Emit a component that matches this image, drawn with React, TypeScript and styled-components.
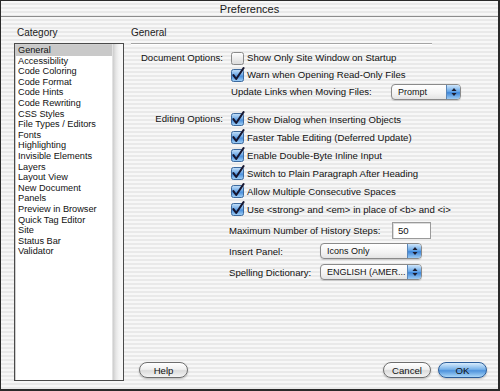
import React from "react";
import styled, { createGlobalStyle, css } from "styled-components";

const GlobalStyle = createGlobalStyle`
  html, body { margin: 0; padding: 0; background: #fff; }
  body { font-family: "Liberation Sans", Arial, sans-serif; }
  * { box-sizing: border-box; }
`;

const pinstripe = css`
  background: repeating-linear-gradient(
    to bottom,
    #f7f7f7 0px,
    #f7f7f7 2px,
    #e9e9e9 2px,
    #e9e9e9 4px
  );
`;

const Window = styled.div`
  width: 500px;
  height: 391px;
  display: flex;
  flex-direction: column;
  border-top: 1px solid #2a2a2a;
  border-left: 1px solid #2a2a2a;
  border-right: 2px solid #2a2a2a;
  border-bottom: 2px solid #2a2a2a;
  ${pinstripe}
  font-size: 9.6px;
  color: #111;
`;

const TitleBar = styled.div`
  height: 16px;
  flex: none;
  display: flex;
  align-items: center;
  justify-content: center;
  border-bottom: 1px solid #8c8c8c;
  font-size: 11px;
  color: #1a1a1a;
`;

const Body = styled.div`
  flex: 1;
  display: flex;
  padding: 10px 11px 8px 13px;
  min-height: 0;
`;

const Sidebar = styled.div`
  width: 110px;
  flex: none;
  display: flex;
  flex-direction: column;
`;

const SectionTitle = styled.div<{ $indent?: number }>`
  height: 12px;
  line-height: 12px;
  padding-left: ${(p) => p.$indent ?? 0}px;
  margin-bottom: 4px;
  font-size: 10px;
  color: #222;
`;

const ListBox = styled.div`
  flex: 1;
  display: flex;
  background: #fff;
  border: 1px solid #4a4a4a;
  box-shadow: inset 1px 1px 0 #cfcfcf;
`;

const ListItems = styled.div`
  flex: 1;
  padding-top: 1px;
`;

const ListItem = styled.div<{ $selected?: boolean }>`
  height: 10.6px;
  line-height: 10.6px;
  font-size: 9.2px;
  padding-left: 3px;
  white-space: nowrap;
  ${(p) =>
    p.$selected &&
    css`
      background: #c9c9c9;
    `}
`;

const ScrollTrack = styled.div`
  width: 11px;
  flex: none;
  background: linear-gradient(to right, #cdcdcd 0px, #e6e6e6 3px, #f4f4f4 6px, #f8f8f8 100%);
  border-left: 1px solid #e2e2e2;
`;

const Main = styled.div`
  flex: 1;
  margin-left: 7px;
  display: flex;
  flex-direction: column;
`;

const Rule = styled.div`
  width: 301px;
  height: 1px;
  background: #a4a4a4;
  box-shadow: 0 1px 0 #fff;
`;

const Form = styled.div`
  display: flex;
  flex-direction: column;
  padding-top: 5px;
`;

const Group = styled.div<{ $gap?: number }>`
  display: grid;
  grid-template-columns: 92px 1fr;
  column-gap: 8px;
  margin-top: ${(p) => p.$gap ?? 0}px;
`;

const GroupLabel = styled.div<{ $h: number }>`
  text-align: right;
  height: ${(p) => p.$h}px;
  line-height: ${(p) => p.$h}px;
  white-space: nowrap;
`;

const Rows = styled.div`
  display: flex;
  flex-direction: column;
`;

const CheckRow = styled.div<{ $h: number }>`
  display: flex;
  align-items: center;
  height: ${(p) => p.$h}px;
  gap: 2px;
  white-space: nowrap;
`;

const FieldRow = styled.div<{ $h: number; $indent?: number }>`
  display: flex;
  align-items: center;
  height: ${(p) => p.$h}px;
  margin-left: ${(p) => p.$indent ?? 0}px;
  white-space: nowrap;
`;

const FieldLabel = styled.div<{ $w: number }>`
  width: ${(p) => p.$w}px;
  flex: none;
`;

const TextInput = styled.div<{ $w: number }>`
  width: ${(p) => p.$w}px;
  height: 17px;
  line-height: 15px;
  padding-left: 5px;
  background: #fff;
  border: 1px solid #9a9a9a;
  box-shadow: inset 1px 1px 0 #dcdcdc;
`;

const Select = styled.div<{ $w: number }>`
  width: ${(p) => p.$w}px;
  height: 16px;
  display: flex;
  border: 1px solid #8a8a8a;
  border-radius: 4px;
  background: linear-gradient(to bottom, #ffffff, #f3f3f3 60%, #e4e4e4);
  box-shadow: 0 1px 1px rgba(0, 0, 0, 0.15);
  overflow: hidden;
`;

const SelectText = styled.div`
  flex: 1;
  min-width: 0;
  line-height: 14px;
  font-size: 9px;
  padding-left: 6px;
  white-space: nowrap;
`;

const SelectCap = styled.div`
  width: 14px;
  flex: none;
  display: flex;
  align-items: center;
  justify-content: center;
  background: linear-gradient(to bottom, #cfe6fb, #6aa9e8 45%, #3e86d8 55%, #9dcbf3);
  border-left: 1px solid #5a86b8;
`;

const Spacer = styled.div`
  flex: 1;
`;

const ButtonBar = styled.div`
  display: flex;
  align-items: center;
  padding: 0 0 3px 8px;
  gap: 7px;
`;

const Button = styled.div<{ $primary?: boolean; $w: number }>`
  width: ${(p) => p.$w}px;
  height: 16px;
  border-radius: 8px;
  display: flex;
  align-items: center;
  justify-content: center;
  font-size: 9.6px;
  border: 1px solid #6e6e6e;
  box-shadow: 0 1px 2px rgba(0, 0, 0, 0.25);
  background: linear-gradient(to bottom, #ffffff 0%, #f0f0f0 45%, #dcdcdc 55%, #f4f4f4 100%);
  ${(p) =>
    p.$primary &&
    css`
      border-color: #2c5d99;
      background: linear-gradient(to bottom, #d8ecfc 0%, #79b3ea 45%, #4f93dc 55%, #a9d6f8 100%);
    `}
`;

function CheckBox({ checked }: { checked: boolean }) {
  return (
    <svg width="14" height="14" viewBox="0 0 14 14" style={{ flex: "none", overflow: "visible" }}>
      <defs>
        <linearGradient id="cbOff" x1="0" y1="0" x2="0" y2="1">
          <stop offset="0" stopColor="#ffffff" />
          <stop offset="1" stopColor="#dadada" />
        </linearGradient>
        <linearGradient id="cbOn" x1="0" y1="0" x2="0" y2="1">
          <stop offset="0" stopColor="#c7e2fa" />
          <stop offset="0.45" stopColor="#6fa9e6" />
          <stop offset="0.55" stopColor="#4a8fdc" />
          <stop offset="1" stopColor="#a6d3f7" />
        </linearGradient>
      </defs>
      <rect
        x="0.5"
        y="1.5"
        width="12"
        height="12"
        rx="2"
        fill={checked ? "url(#cbOn)" : "url(#cbOff)"}
        stroke={checked ? "#3d6a9e" : "#8a8a8a"}
      />
      {checked && (
        <path
          d="M2.4 7.2 L5.2 11 L12.6 0"
          fill="none"
          stroke="#161630"
          strokeWidth="2.1"
          strokeLinecap="round"
          strokeLinejoin="round"
        />
      )}
    </svg>
  );
}

function Arrows() {
  return (
    <svg width="6" height="10" viewBox="0 0 6 10">
      <path d="M3 1 L5.5 4 L0.5 4 Z" fill="#1d1d2e" />
      <path d="M3 9 L5.5 6 L0.5 6 Z" fill="#1d1d2e" />
    </svg>
  );
}

function PopUp({ value, width }: { value: string; width: number }) {
  return (
    <Select $w={width}>
      <SelectText>{value}</SelectText>
      <SelectCap>
        <Arrows />
      </SelectCap>
    </Select>
  );
}

const categories = [
  "General",
  "Accessibility",
  "Code Coloring",
  "Code Format",
  "Code Hints",
  "Code Rewriting",
  "CSS Styles",
  "File Types / Editors",
  "Fonts",
  "Highlighting",
  "Invisible Elements",
  "Layers",
  "Layout View",
  "New Document",
  "Panels",
  "Preview in Browser",
  "Quick Tag Editor",
  "Site",
  "Status Bar",
  "Validator",
];

const editing = [
  "Show Dialog when Inserting Objects",
  "Faster Table Editing (Deferred Update)",
  "Enable Double-Byte Inline Input",
  "Switch to Plain Paragraph After Heading",
  "Allow Multiple Consecutive Spaces",
  "Use <strong> and <em> in place of <b> and <i>",
];

export default function App() {
  return (
    <>
      <GlobalStyle />
      <Window>
        <TitleBar>Preferences</TitleBar>
        <Body>
          <Sidebar>
            <SectionTitle $indent={3}>Category</SectionTitle>
            <ListBox>
              <ListItems>
                {categories.map((c, i) => (
                  <ListItem key={c} $selected={i === 0}>
                    {c}
                  </ListItem>
                ))}
              </ListItems>
              <ScrollTrack />
            </ListBox>
          </Sidebar>
          <Main>
            <SectionTitle>General</SectionTitle>
            <Rule />
            <Form>
              <Group>
                <GroupLabel $h={17}>Document Options:</GroupLabel>
                <Rows>
                  <CheckRow $h={17}>
                    <CheckBox checked={false} />
                    Show Only Site Window on Startup
                  </CheckRow>
                  <CheckRow $h={17}>
                    <CheckBox checked />
                    Warn when Opening Read-Only Files
                  </CheckRow>
                  <FieldRow $h={17}>
                    <FieldLabel $w={160}>Update Links when Moving Files:</FieldLabel>
                    <PopUp value="Prompt" width={70} />
                  </FieldRow>
                </Rows>
              </Group>
              <Group $gap={10}>
                <GroupLabel $h={18}>Editing Options:</GroupLabel>
                <Rows>
                  {editing.map((t) => (
                    <CheckRow $h={18} key={t}>
                      <CheckBox checked />
                      {t}
                    </CheckRow>
                  ))}
                  <FieldRow $h={24} $indent={-2}>
                    <FieldLabel $w={163}>Maximum Number of History Steps:</FieldLabel>
                    <TextInput $w={39}>50</TextInput>
                  </FieldRow>
                  <FieldRow $h={18} $indent={-2}>
                    <FieldLabel $w={91}>Insert Panel:</FieldLabel>
                    <PopUp value="Icons Only" width={102} />
                  </FieldRow>
                  <FieldRow $h={24} $indent={-2}>
                    <FieldLabel $w={91}>Spelling Dictionary:</FieldLabel>
                    <PopUp value="ENGLISH (AMER..." width={102} />
                  </FieldRow>
                </Rows>
              </Group>
            </Form>
            <Spacer />
            <ButtonBar>
              <Button $w={49}>Help</Button>
              <Spacer />
              <Button $w={48}>Cancel</Button>
              <Button $w={49} $primary>
                OK
              </Button>
            </ButtonBar>
          </Main>
        </Body>
      </Window>
    </>
  );
}
